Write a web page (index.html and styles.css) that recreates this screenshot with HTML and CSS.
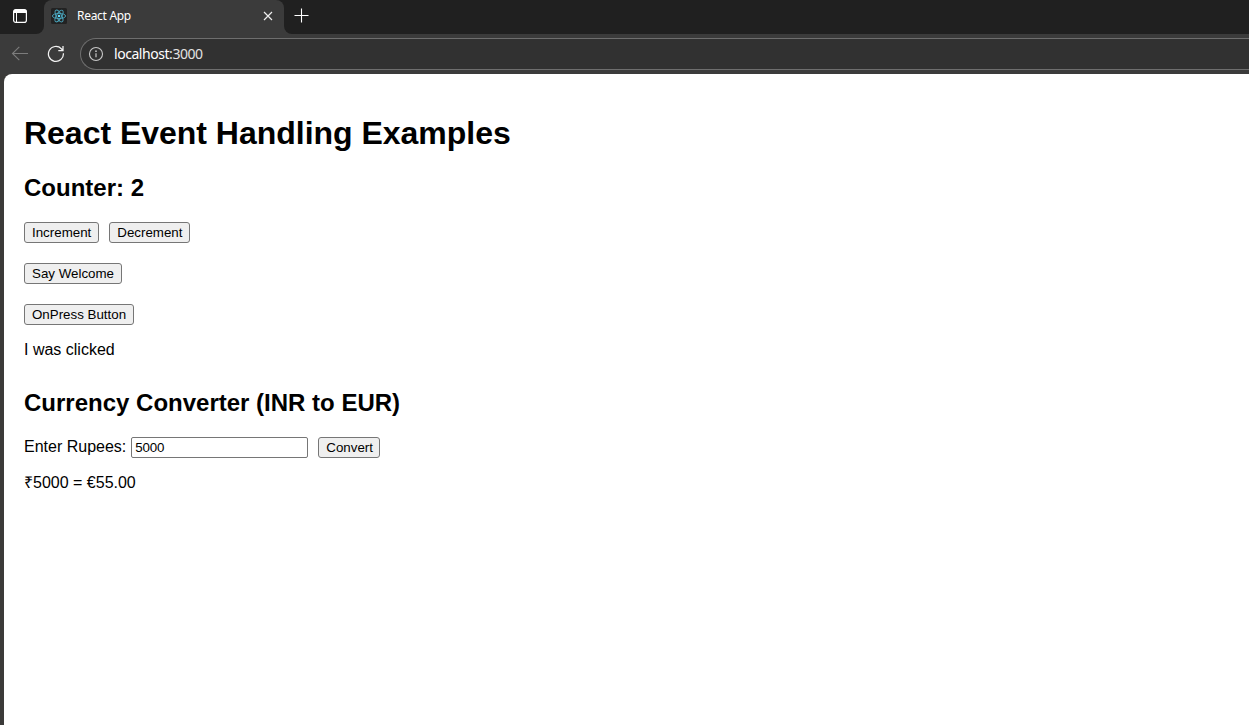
FILE: index.html
```
<!DOCTYPE html>
<html lang="en">
<head>
<meta charset="utf-8">
<title>React App</title>
<link rel="stylesheet" href="styles.css">
</head>
<body>
<div class="browser">
  <header class="tab-strip">
    <div class="strip-start">
      <svg width="16" height="16" viewBox="0 0 16 16"><rect x="1.6" y="1.6" width="12.8" height="12.8" rx="2.2" fill="none" stroke="#fff" stroke-width="1.2"/><path d="M1.5 5V3.5a2 2 0 0 1 2-2h9a2 2 0 0 1 2 2V5z" fill="#fff"/><path d="M4.5 5v9" stroke="#fff"/></svg>
    </div>
    <div class="tab">
      <svg class="favicon" width="16" height="16" viewBox="0 0 16 16"><rect width="16" height="16" rx="1.5" fill="#222"/><g fill="none" stroke="#4aa5bd" stroke-width=".9"><ellipse cx="8" cy="8" rx="6.6" ry="2.6"/><ellipse cx="8" cy="8" rx="6.6" ry="2.6" transform="rotate(60 8 8)"/><ellipse cx="8" cy="8" rx="6.6" ry="2.6" transform="rotate(120 8 8)"/></g><circle cx="8" cy="8" r="1.3" fill="#61dafb"/></svg>
      <span class="tab-title">React App</span>
      <svg class="tab-close" width="10" height="10" viewBox="0 0 10 10"><path d="M1 1l8 8M9 1L1 9" stroke="#eee" stroke-width="1.2"/></svg>
    </div>
    <div class="strip-end">
      <svg width="15" height="15" viewBox="0 0 15 15"><path d="M7.5 .5v14M.5 7.5h14" stroke="#fff" stroke-width="1.1"/></svg>
    </div>
  </header>
  <nav class="toolbar">
    <svg class="back" width="18" height="16" viewBox="0 0 18 16"><path d="M17 7.5H1.5M8.3 .8L1.5 7.5l6.8 6.7" fill="none" stroke="#7c7c7c" stroke-width="1.1"/></svg>
    <svg class="reload" width="18" height="18" viewBox="0 0 18 18"><path d="M16.4 8.3a7.5 7.5 0 1 1-2.1-4.6L16 5.5M16 1v4.7h-4.7" fill="none" stroke="#f2f2f2" stroke-width="1.25"/></svg>
    <div class="address">
      <svg width="16" height="16" viewBox="0 0 16 16"><circle cx="8" cy="8" r="6.5" fill="none" stroke="#c8c8c8" stroke-width="1.1"/><path d="M8 7.2v4" stroke="#c8c8c8" stroke-width="1.2"/><circle cx="8" cy="5.2" r=".85" fill="#c8c8c8"/></svg>
      <span class="url"><span class="host">localhost</span>:3000</span>
    </div>
  </nav>
  <main class="page">
    <h1>React Event Handling Examples</h1>
    <h2>Counter: 2</h2>
    <div class="row"><button>Increment</button><button>Decrement</button></div>
    <div class="row"><button>Say Welcome</button></div>
    <div class="row"><button>OnPress Button</button></div>
    <p class="message">I was clicked</p>
    <h2 class="converter-title">Currency Converter (INR to EUR)</h2>
    <div class="form"><label for="rupees">Enter Rupees:</label><input id="rupees" value="5000"><button class="convert">Convert</button></div>
    <p class="result">₹5000 = €55.00</p>
  </main>
</div>
</body>
</html>
```
FILE: styles.css
```
* { box-sizing: border-box; }
body { margin: 0; background: #3b3a39; overflow: hidden; }
svg { display: block; flex: none; }
.browser { height: 725px; display: flex; flex-direction: column; }

.tab-strip { height: 34px; display: flex; flex: none; background: #3b3b3b; font-family: "Noto Sans", sans-serif; }
.strip-start { width: 44px; padding: 8px 12px; background: #202020; border-bottom-right-radius: 8px; }
.tab { width: 240px; padding: 0 11px 2px 7px; display: flex; align-items: center; color: #fff; background: linear-gradient(#202020, #202020) no-repeat 0 0 / 100% 10px; position: relative; z-index: 0; }
.tab::before { content: ""; position: absolute; inset: 0; z-index: -1; background: #3b3b3b; border-radius: 8px 8px 0 0; }
.tab-title { margin-left: 10px; padding-bottom: 1px; font-size: 12px; letter-spacing: -0.3px; }
.tab-close { margin-left: auto; }
.strip-end { flex: 1; padding: 8px 10px; background: #202020; border-bottom-left-radius: 8px; }

.toolbar { height: 40px; flex: none; display: flex; align-items: center; padding-left: 11px; background: #3b3b3b; }
.reload { margin-left: 18px; }
.address { flex: 1; height: 32px; margin-left: 15px; padding-left: 7px; display: flex; align-items: center; background: #313131; border: 1px solid #6e6e6e; border-right: 0; border-radius: 16px 0 0 16px; }
.url { margin-left: 10px; padding-bottom: 1px; font: 14px "Noto Sans", sans-serif; letter-spacing: -0.45px; color: #e2e2e2; }
.host { color: #fff; }

.page { flex: 1; margin-left: 4px; padding: 41px 20px 20px; background: #fff; border-top-left-radius: 8px; color: #000; font: 16px "Liberation Sans", Arial, sans-serif; }
h1 { margin: 0 0 21px; font-size: 32px; line-height: 37px; letter-spacing: -0.02px; }
h2 { margin: 0 0 20px; font-size: 24px; line-height: 29px; }
.row { display: flex; gap: 10px; margin-bottom: 20px; }
button { height: 21px; padding: 1px 7px; border: 1px solid #767676; border-radius: 3px; background: #efefef; color: #000; font: 13.333px "Liberation Sans", Arial, sans-serif; white-space: nowrap; }
.convert { width: 62px; }
p { margin: 0; line-height: 18px; }
.message { margin-top: -4px; }
.converter-title { margin: 29px 0 20px; }
.form { display: flex; align-items: center; margin-bottom: 16px; }
label { line-height: 18px; margin-bottom: 2px; }
input { width: 177px; height: 21px; margin: 0 10px 0 5px; padding: 1px 3px; border: 1px solid #767676; border-radius: 2px; font: 13.333px "Liberation Sans", Arial, sans-serif; letter-spacing: -0.2px; color: #000; background: #fff; }
```
